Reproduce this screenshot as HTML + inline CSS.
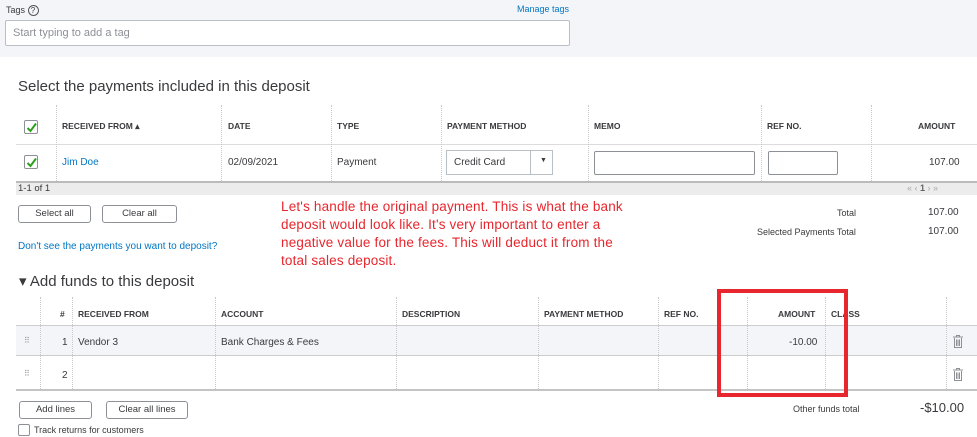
<!DOCTYPE html><html><head><style>
*{box-sizing:border-box;margin:0;padding:0}
body{width:977px;height:437px;position:relative;background:#fff;font-family:"Liberation Sans",sans-serif;color:#393a3d;overflow:hidden;font-size:10px}
.a{position:absolute;white-space:nowrap}
.vl{position:absolute;border-left:1px dotted #c8c8c8}
.h{font-size:8.5px;font-weight:bold;color:#393a3d}
.btn{position:absolute;border:1px solid #8d9096;border-radius:3px;font-size:9.5px;text-align:center;line-height:16px;height:18px;background:#fff}
.cb{position:absolute;width:14px;height:14px;border:1px solid #8d9096;border-radius:2px;background:#fff}
.cb svg{position:absolute;left:1px;top:1px}
</style></head><body>
<div class="a" style="left:0;top:0;width:977px;height:57px;background:#f4f5f8"></div>
<div class="a" style="left:6px;top:5px;font-size:9px">Tags <span style="display:inline-block;width:11px;height:11px;border:1px solid #555;border-radius:50%;font-size:8px;text-align:center;line-height:9px">?</span></div>
<div class="a" style="left:517px;top:4px;font-size:9px;color:#0077c5">Manage tags</div>
<div class="a" style="left:5px;top:20px;width:565px;height:26px;border:1px solid #babec5;border-radius:2px;background:#fff;font-size:11px;color:#8d9096;padding:6px 7px">Start typing to add a tag</div>
<div class="a" style="left:18px;top:78px;font-size:15px;color:#393a3d">Select the payments included in this deposit</div>
<div class="a" style="left:16px;top:144px;width:961px;height:1px;background:#dcdcdc"></div>
<div class="a" style="left:16px;top:181px;width:961px;height:14px;background:#ececec;border-top:2px solid #bbb;font-size:9.5px;padding-left:2px;line-height:12px">1-1 of 1</div>
<div class="a" style="left:907px;top:183px;font-size:9px;color:#aaa">« ‹ <b style="color:#666">1</b> › »</div>
<div class="vl" style="left:56px;top:105px;height:76px"></div>
<div class="vl" style="left:221px;top:105px;height:76px"></div>
<div class="vl" style="left:331px;top:105px;height:76px"></div>
<div class="vl" style="left:441px;top:105px;height:76px"></div>
<div class="vl" style="left:588px;top:105px;height:76px"></div>
<div class="vl" style="left:761px;top:105px;height:76px"></div>
<div class="vl" style="left:871px;top:105px;height:76px"></div>
<div class="cb" style="left:24px;top:120px"><svg width="11" height="11" viewBox="0 0 11 11"><path d="M1.5 6 L4.5 9 L10 1.5" stroke="#2ca01c" stroke-width="2" fill="none"/></svg></div>
<div class="cb" style="left:24px;top:155px"><svg width="11" height="11" viewBox="0 0 11 11"><path d="M1.5 6 L4.5 9 L10 1.5" stroke="#2ca01c" stroke-width="2" fill="none"/></svg></div>
<div class="a h" style="left:62px;top:121px">RECEIVED FROM ▴</div>
<div class="a h" style="left:228px;top:121px">DATE</div>
<div class="a h" style="left:337px;top:121px">TYPE</div>
<div class="a h" style="left:447px;top:121px">PAYMENT METHOD</div>
<div class="a h" style="left:594px;top:121px">MEMO</div>
<div class="a h" style="left:767px;top:121px">REF NO.</div>
<div class="a h" style="left:918px;top:121px">AMOUNT</div>
<div class="a" style="left:62px;top:157px;color:#0077c5">Jim Doe</div>
<div class="a" style="left:228px;top:157px">02/09/2021</div>
<div class="a" style="left:337px;top:157px">Payment</div>
<div class="a" style="left:446px;top:150px;width:107px;height:25px;border:1px solid #babec5;background:#fff;padding:6px 7px">Credit Card<span style="position:absolute;left:83px;top:0;height:23px;border-left:1px solid #babec5"></span><span style="position:absolute;left:93px;top:6px;font-size:7px">▼</span></div>
<div class="a" style="left:594px;top:151px;width:161px;height:24px;border:1px solid #8d9096;border-radius:2px"></div>
<div class="a" style="left:768px;top:151px;width:70px;height:24px;border:1px solid #8d9096;border-radius:2px"></div>
<div class="a" style="left:929px;top:157px">107.00</div>
<div class="btn" style="left:18px;top:205px;width:73px">Select all</div>
<div class="btn" style="left:102px;top:205px;width:75px">Clear all</div>
<div class="a" style="left:18px;top:241px;color:#0077c5">Don't see the payments you want to deposit?</div>
<div class="a" style="left:281px;top:198px;font-size:13.5px;color:#e8262d;line-height:18px;letter-spacing:0.18px">Let's handle the original payment. This is what the bank<br>deposit would look like. It's very important to enter a<br>negative value for the fees. This will deduct it from the<br>total sales deposit.</div>
<div class="a" style="left:837px;top:208px;font-size:9px">Total</div>
<div class="a" style="left:928px;top:207px">107.00</div>
<div class="a" style="left:757px;top:227px;font-size:9px">Selected Payments Total</div>
<div class="a" style="left:928px;top:226px">107.00</div>
<div class="a" style="left:19px;top:272px;font-size:15px">▾ Add funds to this deposit</div>
<div class="a" style="left:16px;top:325px;width:961px;height:31px;background:#f4f5f8;border-top:1px solid #ccc;border-bottom:1px solid #ccc"></div>
<div class="a" style="left:16px;top:389px;width:961px;height:2px;background:#c4c4c4"></div>
<div class="vl" style="left:40px;top:297px;height:92px"></div>
<div class="vl" style="left:72px;top:297px;height:92px"></div>
<div class="vl" style="left:215px;top:297px;height:92px"></div>
<div class="vl" style="left:396px;top:297px;height:92px"></div>
<div class="vl" style="left:538px;top:297px;height:92px"></div>
<div class="vl" style="left:658px;top:297px;height:92px"></div>
<div class="vl" style="left:747px;top:297px;height:92px"></div>
<div class="vl" style="left:825px;top:297px;height:92px"></div>
<div class="vl" style="left:946px;top:297px;height:92px"></div>
<div class="a h" style="left:60px;top:309px">#</div>
<div class="a h" style="left:78px;top:309px">RECEIVED FROM</div>
<div class="a h" style="left:221px;top:309px">ACCOUNT</div>
<div class="a h" style="left:402px;top:309px">DESCRIPTION</div>
<div class="a h" style="left:544px;top:309px">PAYMENT METHOD</div>
<div class="a h" style="left:664px;top:309px">REF NO.</div>
<div class="a h" style="left:778px;top:309px">AMOUNT</div>
<div class="a h" style="left:831px;top:309px">CLASS</div>
<div class="a" style="left:24px;top:336px;color:#999;font-size:8px">⠿</div>
<div class="a" style="left:24px;top:369px;color:#999;font-size:8px">⠿</div>
<div class="a" style="left:62px;top:337px">1</div>
<div class="a" style="left:62px;top:370px">2</div>
<div class="a" style="left:78px;top:337px">Vendor 3</div>
<div class="a" style="left:221px;top:337px">Bank Charges &amp; Fees</div>
<div class="a" style="left:789px;top:337px">-10.00</div>
<svg class="a" style="left:953px;top:335px" width="10" height="13" viewBox="0 0 10 13"><path d="M0 2h10M3.5 2V0.5h3V2M1.5 3v9.5h7V3M3.5 4.5v6.5M5 4.5v6.5M6.5 4.5v6.5" stroke="#8d9096" fill="none" stroke-width="1"/></svg>
<svg class="a" style="left:953px;top:368px" width="10" height="13" viewBox="0 0 10 13"><path d="M0 2h10M3.5 2V0.5h3V2M1.5 3v9.5h7V3M3.5 4.5v6.5M5 4.5v6.5M6.5 4.5v6.5" stroke="#8d9096" fill="none" stroke-width="1"/></svg>
<div class="a" style="left:717px;top:289px;width:131px;height:108px;border:4px solid #e8262d"></div>
<div class="btn" style="left:19px;top:401px;width:73px">Add lines</div>
<div class="btn" style="left:106px;top:401px;width:82px">Clear all lines</div>
<div class="a" style="left:793px;top:404px;font-size:9px">Other funds total</div>
<div class="a" style="left:920px;top:400px;font-size:13px">-$10.00</div>
<div class="a" style="left:18px;top:424px;width:12px;height:12px;border:1px solid #8d9096;border-radius:2px"></div>
<div class="a" style="left:34px;top:425px;font-size:9px">Track returns for customers</div>
</body></html>
